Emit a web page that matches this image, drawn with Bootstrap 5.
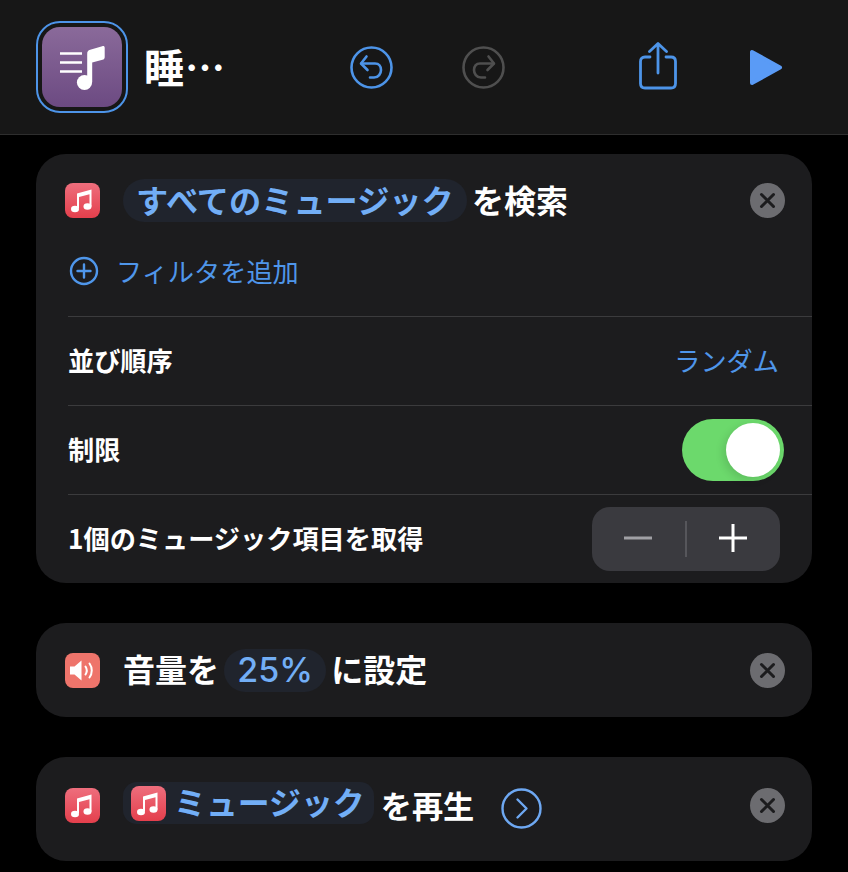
<!DOCTYPE html>
<html lang="ja">
<head>
    <meta charset="UTF-8">
    <meta name="viewport" content="width=device-width, initial-scale=1.0">
    <title>ショートカット</title>
    <link rel="stylesheet" href="https://cdn.jsdelivr.net/npm/bootstrap@5.3.0/dist/css/bootstrap.min.css">
    <style>
        html, body {
            background: #000;
            margin: 0;
        }
        body {
            width: 848px;
            height: 872px;
            overflow: hidden;
            font-family: "Noto Sans CJK JP", "Liberation Sans", sans-serif;
            color: #fff;
        }
        svg { display: block; flex: none; }

        /* ヘッダー */
        .top-bar {
            height: 135px;
            background: #171717;
            border-bottom: 1px solid #2e2e2e;
            padding-left: 36px;
        }
        .app-frame {
            width: 92px;
            height: 92px;
            margin-top: -1px;
            border: 2px solid #4d94e8;
            border-radius: 24px;
            padding: 4px;
        }
        .app-tile {
            width: 80px;
            height: 80px;
            border-radius: 18px;
            background: linear-gradient(#8a6a9a, #6c4a82);
        }
        .top-title {
            width: 206px;
            margin-left: 16px;
            font-size: 40px;
            font-weight: 700;
            line-height: 1;
            padding-bottom: 2px;
            letter-spacing: 1px;
        }
        .redo-gap { margin-left: 69px; }
        .share-gap { margin-left: 134px; margin-top: -3px; }
        .play-gap { margin-left: 73px; }

        /* カード */
        .sheet {
            margin: 19px 36px 40px;
            background: #1c1c1e;
            border-radius: 30px;
        }
        .sheet-head {
            padding: 25px 27px 6px 29px;
            height: 74px;
        }
        .sheet-one { height: 94px; padding: 0 27px 0 29px; }
        .sheet-two { height: 104px; padding: 0 27px 8px 29px; }
        .app-ico {
            width: 35px;
            height: 35px;
            border-radius: 8px;
            background: linear-gradient(#ee6e7d, #e43f4c);
        }
        .ico-volume { background: #ee746b; }
        .phrase {
            margin-left: 23px;
            font-size: 32px;
            font-weight: 700;
            line-height: 41px;
            white-space: nowrap;
            word-spacing: -2px;
        }
        .pill {
            display: inline-block;
            background: #20242d;
            color: #72aef6;
            border-radius: 22px;
            padding: 0 13px;
            height: 43px;
        }
        .pill-wide { font-size: 32.200px; }
        .pill-num {
            font-family: "Inter", "Liberation Sans", sans-serif;
            font-size: 34px;
            font-weight: 500;
        }
        .pill-app {
            font-size: 31.900px;
            border-radius: 14px;
            padding: 4px 9px 4px 8px;
            height: 42px;
            margin-bottom: 4px;
            line-height: 30px;
            gap: 8px;
        }
        .play-word { margin-left: 7px; font-size: 31.200px; padding-bottom: 2px; }
        .chevron-gap { margin: 7px 0 0 27px; }
        .close-btn {
            width: 35px;
            height: 35px;
            border-radius: 50%;
            background: #6c6c70;
        }
        .filter-line {
            height: 88px;
            padding-left: 33px;
            color: #4f96ea;
            font-size: 26px;
            line-height: 1;
            padding-bottom: 2px;
        }
        .filter-text { margin-left: 1px; font-size: 26.200px; }
        .set-line {
            height: 89px;
            margin-left: 32px;
            padding-right: 32px;
            border-top: 1px solid #3b3b3d;
            font-size: 26.200px;
            font-weight: 700;
            line-height: 1;
        }
        .line-label { padding-bottom: 2px; }
        .set-value { color: #4f96ea; font-weight: 400; padding: 0 1px 2px 0; }
        .switch-on {
            width: 102px;
            height: 62px;
            margin-right: -4px;
            padding: 4px;
            border-radius: 31px;
            background: #6cd96c;
        }
        .switch-knob {
            width: 54px;
            height: 54px;
            border-radius: 50%;
            background: #fff;
            box-shadow: -3px 3px 8px rgba(0, 0, 0, .12);
        }
        .stepper {
            width: 188px;
            height: 64px;
            margin-top: -1px;
            border-radius: 18px;
            background: #3a3a3f;
        }
        .step-cell { width: 93px; padding-bottom: 2px; }
        .step-cell svg { margin-right: 2px; }
        .step-line {
            width: 2px;
            height: 36px;
            background: #56565b;
        }
    </style>
</head>
<body>

<svg class="d-none">
    <symbol id="note" viewBox="0 0 35 35">
        <path d="M12 25V10.500L26.500 6.500v17h-2V11.200L14 13.900V25z" fill="#fff"/>
        <ellipse cx="10" cy="26" rx="4" ry="3.200" fill="#fff"/>
        <ellipse cx="22.500" cy="23.500" rx="4" ry="3.200" fill="#fff"/>
    </symbol>
    <symbol id="cross" viewBox="0 0 35 35">
        <path d="M11.500 11.500l12 12M23.500 11.500l-12 12" fill="none" stroke="#1c1c1e" stroke-width="3" stroke-linecap="round"/>
    </symbol>
</svg>

<header class="top-bar d-flex align-items-center">
    <div class="app-frame">
        <div class="app-tile">
            <svg width="80" height="80" viewBox="0 0 80 80">
                <path d="M18 26.500h22M18 35.500h22M18 44.500h22" stroke="#fff" stroke-width="2.600" fill="none"/>
                <ellipse cx="42.500" cy="55.500" rx="7.600" ry="7.400" fill="#fff"/>
                <path d="M45.200 55V27c0-2.500 .8-3.600 3-4.200l12-3.600c1.600-.4 2.500.2 2.500 1.800v9c0 1.600-.6 2.400-2.200 2.800L50.200 35.500V55z" fill="#fff"/>
            </svg>
        </div>
    </div>
    <div class="top-title">睡…</div>
    <svg width="43" height="43" viewBox="0 0 43 43" fill="none" stroke="#4d94e8" stroke-width="2.600" stroke-linecap="round" stroke-linejoin="round">
        <circle cx="21.500" cy="21.500" r="20"/>
        <path d="M16.500 10.500l-5.500 7 6.500 6.500"/>
        <path d="M11.500 17.500H25c4 0 6 3 6 6.500s-2.500 7.500-7 7.500h-4"/>
    </svg>
    <svg class="redo-gap" width="43" height="43" viewBox="0 0 43 43" fill="none" stroke="#4f4f4f" stroke-width="2.600" stroke-linecap="round" stroke-linejoin="round">
        <circle cx="21.500" cy="21.500" r="20"/>
        <path d="M26.500 10.500l5.500 7-6.500 6.500"/>
        <path d="M31.500 17.500H18c-4 0-6 3-6 6.500s2.500 7.500 7 7.500h4"/>
    </svg>
    <svg class="share-gap" width="38" height="48" viewBox="0 0 38 48" fill="none" stroke="#4d94e8" stroke-width="2.800" stroke-linecap="round" stroke-linejoin="round">
        <path d="M11 15H6c-3 0-4.500 1.500-4.500 4.500v22c0 3 1.500 4.500 4.500 4.500h26c3 0 4.500-1.500 4.500-4.500v-22c0-3-1.500-4.500-4.500-4.500h-5"/>
        <path d="M19 31V2M10.500 9.500L19 1.500l8.500 8"/>
    </svg>
    <svg class="play-gap" width="33" height="37" viewBox="0 0 33 37">
        <path d="M2 3v31l28-15.500z" fill="#5a9bf6" stroke="#5a9bf6" stroke-width="4" stroke-linejoin="round"/>
    </svg>
</header>

<main>
    <section class="sheet">
        <div class="sheet-head d-flex align-items-center justify-content-between">
            <div class="d-flex align-items-center">
                <div class="app-ico"><svg width="35" height="35"><use href="#note"/></svg></div>
                <div class="phrase"><span class="pill pill-wide">すべてのミュージック</span> を検索</div>
            </div>
            <div class="close-btn"><svg width="35" height="35"><use href="#cross"/></svg></div>
        </div>
        <div class="filter-line d-flex align-items-center gap-3">
            <svg width="30" height="30" viewBox="0 0 30 30" fill="none" stroke="#4f96ea" stroke-width="2.400" stroke-linecap="round">
                <circle cx="15" cy="15" r="13"/>
                <path d="M15 8.500v13M8.500 15h13"/>
            </svg>
            <span class="filter-text">フィルタを追加</span>
        </div>
        <div class="set-line d-flex align-items-center justify-content-between">
            <span class="line-label">並び順序</span>
            <span class="set-value">ランダム</span>
        </div>
        <div class="set-line d-flex align-items-center justify-content-between">
            <span class="line-label">制限</span>
            <div class="switch-on d-flex justify-content-end"><div class="switch-knob"></div></div>
        </div>
        <div class="set-line d-flex align-items-center justify-content-between">
            <span class="line-label">1個のミュージック項目を取得</span>
            <div class="stepper d-flex align-items-center">
                <div class="step-cell d-flex justify-content-center">
                    <svg width="28" height="4"><path d="M0 2h28" stroke="#a0a0a5" stroke-width="3"/></svg>
                </div>
                <div class="step-line"></div>
                <div class="step-cell d-flex justify-content-center">
                    <svg width="28" height="28"><path d="M0 14h28M14 0v28" stroke="#fff" stroke-width="3"/></svg>
                </div>
            </div>
        </div>
    </section>

    <section class="sheet sheet-one d-flex align-items-center justify-content-between">
        <div class="d-flex align-items-center">
            <div class="app-ico ico-volume">
                <svg width="35" height="35" viewBox="0 0 35 35">
                    <path d="M5 13.500h4.500l7-6v20l-7-6H5z" fill="#fff"/>
                    <path d="M20.500 13.500c1.600 2.500 1.600 5.500 0 8M24.500 10.500c3 4 3 10 0 14" fill="none" stroke="#fff" stroke-width="2" stroke-linecap="round"/>
                </svg>
            </div>
            <div class="phrase">音量を <span class="pill pill-num">25%</span> に設定</div>
        </div>
        <div class="close-btn"><svg width="35" height="35"><use href="#cross"/></svg></div>
    </section>

    <section class="sheet sheet-two d-flex align-items-center justify-content-between">
        <div class="d-flex align-items-center">
            <div class="app-ico"><svg width="35" height="35"><use href="#note"/></svg></div>
            <div class="phrase d-flex align-items-center">
                <span class="pill pill-app d-inline-flex"><span class="app-ico"><svg width="35" height="35"><use href="#note"/></svg></span>ミュージック</span>
                <span class="play-word">を再生</span>
                <svg class="chevron-gap" width="41" height="41" viewBox="0 0 41 41" fill="none" stroke="#6ea8f2" stroke-width="2.400" stroke-linecap="round" stroke-linejoin="round">
                    <circle cx="20.500" cy="20.500" r="19"/>
                    <path d="M16.500 11.500l9 9-9 9"/>
                </svg>
            </div>
        </div>
        <div class="close-btn"><svg width="35" height="35"><use href="#cross"/></svg></div>
    </section>
</main>

<script src="https://cdn.jsdelivr.net/npm/bootstrap@5.3.0/dist/js/bootstrap.bundle.min.js"></script>
</body>
</html>
